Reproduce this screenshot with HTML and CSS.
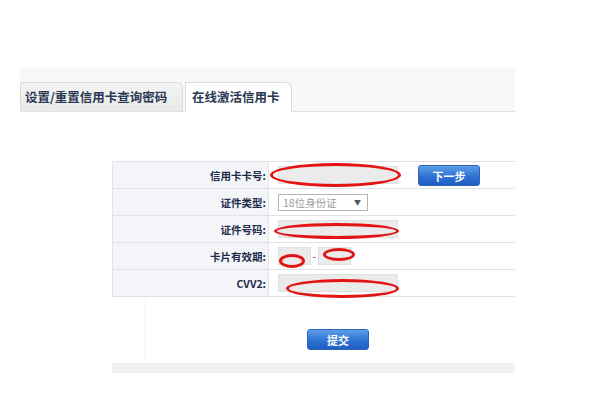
FILE: index.html
```html
<!DOCTYPE html>
<html lang="zh-CN">
<head>
    <meta charset="UTF-8">
    <title>在线激活信用卡</title>
    <link rel="stylesheet" href="styles.css">
</head>
<body>
    <div class="wrap">
        <div class="tabs">
            <div class="tab">设置/重置信用卡查询密码</div>
            <div class="tab active">在线激活信用卡</div>
        </div>

        <div class="panel">
            <table class="form">
                <tr>
                    <td class="label">信用卡卡号:</td>
                    <td class="field">
                        <span class="box wide"></span>
                        <a class="btn next">下一步</a>
                        <span class="mark m1"></span>
                    </td>
                </tr>
                <tr>
                    <td class="label">证件类型:</td>
                    <td class="field">
                        <div class="select"><span>18位身份证</span><i>▼</i></div>
                    </td>
                </tr>
                <tr>
                    <td class="label">证件号码:</td>
                    <td class="field">
                        <span class="box wide"></span>
                        <span class="mark m3"></span>
                    </td>
                </tr>
                <tr>
                    <td class="label">卡片有效期:</td>
                    <td class="field">
                        <span class="box small"></span><span class="dash">-</span><span class="box small"></span>
                        <span class="mark m4a"></span>
                        <span class="mark m4b"></span>
                    </td>
                </tr>
                <tr>
                    <td class="label">CVV2:</td>
                    <td class="field">
                        <span class="box wide"></span>
                        <span class="mark m5"></span>
                    </td>
                </tr>
            </table>

            <div class="submit-row">
                <a class="btn submit">提交</a>
            </div>
            <div class="footer-bar"></div>
        </div>
    </div>
</body>
</html>
```

FILE: styles.css
```css
*{
    margin: 0;
    padding: 0;
    box-sizing: border-box;
}
body{
    background-color: #fff;
    font-family: "Noto Sans CJK SC", "Liberation Sans", sans-serif;
}

.wrap{
    margin-left: 20px;
    padding-top: 68px;
    width: 495px;
}

/* tab bar */
.tabs{
    height: 44px;
    background-color: #f8f8f8;
    border-bottom: 1px solid #e2e2e2;
    display: flex;
    align-items: flex-end;
    gap: 2px;
}
.tab{
    height: 30px;
    margin-bottom: -1px;
    padding: 0 5px 0 4px;
    line-height: 28px;
    font-size: 12.5px;
    font-weight: bold;
    color: #2b3954;
    background: linear-gradient(#f4f4f4, #e9e9e9);
    border: 1px solid #dcdcdc;
    border-bottom-color: #e2e2e2;
    border-radius: 0 6px 0 0;
    width: 163px;
}
.tab.active{
    width: 107px;
    padding-left: 6px;
    background: #fff;
    border-bottom-color: #fff;
}

/* form table */
.panel{
    padding: 49px 0 0 92px;
}
.form{
    width: 403px;
    border-collapse: collapse;
    border-left: 1px solid #e4e4e4;
}
.form td{
    height: 27px;
    border-top: 1px solid #e2e2e2;
    border-bottom: 1px solid #e2e2e2;
}
.label{
    width: 156px;
    text-align: right;
    padding-right: 2px;
    background-color: #f3f5f8;
    border-right: 1px solid #e4e4e4;
    font-size: 10.5px;
    font-weight: bold;
    color: #1f2c4d;
}
.field{
    position: relative;
    padding-left: 9px;
    font-size: 0;
}

.box{
    display: inline-block;
    vertical-align: middle;
    height: 18px;
    background-color: #ebebeb;
    border: 1px solid #e0e0e0;
}
.box.wide{
    width: 120px;
}
.box.small{
    width: 33px;
}
.dash{
    display: inline-block;
    vertical-align: middle;
    width: 7px;
    text-align: center;
    font-size: 11px;
    color: #666;
}

.select{
    display: inline-flex;
    align-items: center;
    justify-content: space-between;
    width: 90px;
    height: 17px;
    padding: 0 6px 0 4px;
    border: 1px solid #b5b5b5;
    font-size: 10.5px;
    color: #999;
    vertical-align: middle;
}
.select i{
    font-style: normal;
    font-size: 7px;
    color: #555;
}

/* blue buttons */
.btn{
    display: inline-block;
    vertical-align: middle;
    width: 62px;
    height: 21px;
    line-height: 21px;
    text-align: center;
    font-size: 11px;
    font-weight: bold;
    color: #fff;
    border-radius: 3px;
    background: linear-gradient(#5c9ee8, #2f72d4 55%, #1f5ec2);
    border: 1px solid #2a64b8;
}
.btn.next{
    margin-left: 20px;
}

.submit-row{
    margin-left: 33px;
    height: 66px;
    border-left: 1px solid #f2f2f2;
    padding: 28px 0 0 161px;
}
.footer-bar{
    height: 10px;
    background-color: #f1f1f1;
}

/* red hand-drawn marks */
.mark{
    position: absolute;
    border: 3px solid #e31414;
    border-radius: 50%;
}
.m1{ left: 1px; top: 1px; width: 131px; height: 24px; }
.m3{ left: 5px; top: 7px; width: 125px; height: 16px; }
.m4a{ left: 10px; top: 11px; width: 26px; height: 14px; }
.m4b{ left: 54px; top: 5px; width: 32px; height: 13px; }
.m5{ left: 17px; top: 9px; width: 113px; height: 19px; }
```
